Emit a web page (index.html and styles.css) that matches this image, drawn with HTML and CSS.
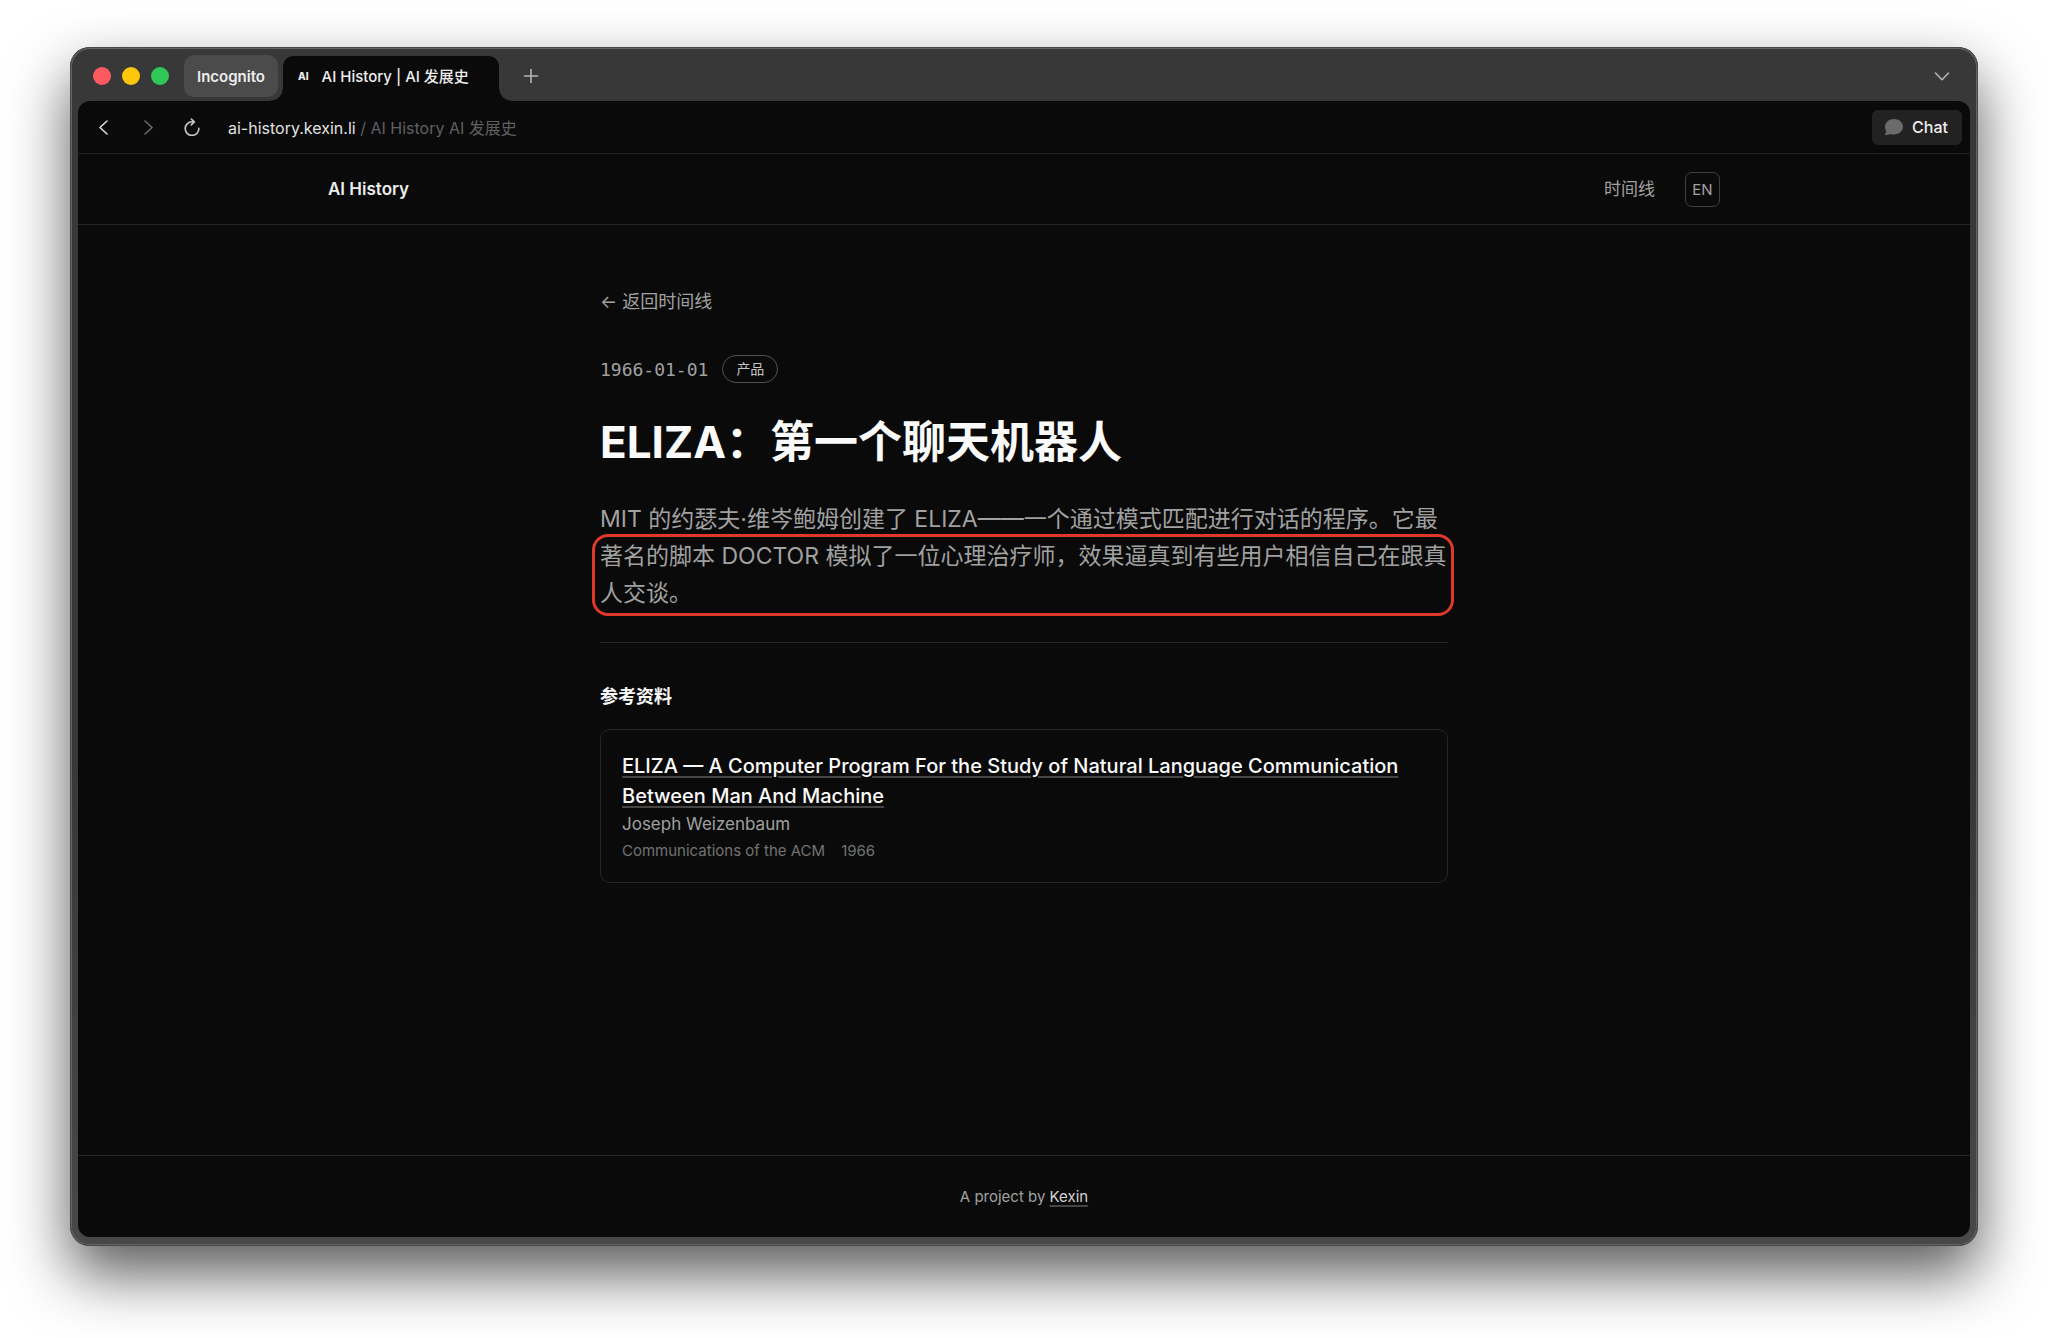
FILE: index.html
```html
<!DOCTYPE html>
<html lang="zh-CN">
<head>
<meta charset="utf-8">
<meta name="viewport" content="width=device-width, initial-scale=1">
<title>AI History | AI 发展史</title>
<link rel="stylesheet" href="styles.css">
</head>
<body>
<div class="window">
  <div class="tabstrip">
    <div class="lights">
      <button class="light light-close" aria-label="Close"></button>
      <button class="light light-min" aria-label="Minimize"></button>
      <button class="light light-zoom" aria-label="Zoom"></button>
    </div>
    <button class="profile">Incognito</button>
    <button class="tab"><span class="favicon">AI</span><span>AI History | AI 发展史</span></button>
    <button class="icon-btn new-tab" aria-label="New tab">
      <svg width="16" height="16" viewBox="0 0 16 16"><path d="M8 1.5v13M1.5 8h13"/></svg>
    </button>
    <button class="icon-btn tab-list" aria-label="Tab list">
      <svg width="16" height="16" viewBox="0 0 16 16"><path d="M1.5 5 8 11.700l6.500-6.700"/></svg>
    </button>
  </div>

  <div class="view">
    <div class="toolbar">
      <nav class="history" aria-label="Browser">
        <button class="icon-btn back" aria-label="Back">
          <svg width="16" height="16" viewBox="0 0 16 16"><path d="M11 2 4 8.500l7 6.500"/></svg>
        </button>
        <button class="icon-btn forward" aria-label="Forward">
          <svg width="16" height="16" viewBox="0 0 16 16"><path d="M5 2l7 6.500L5 15"/></svg>
        </button>
        <button class="icon-btn reload" aria-label="Reload">
          <svg width="16" height="18" viewBox="0 0 16 18"><path d="M14.800 10.200A6.800 6.800 0 1 1 8 3.800h2M7.300 1l3 2.900-3 3"/></svg>
        </button>
      </nav>
      <div class="address"><span class="host">ai-history.kexin.li</span> / AI History AI 发展史</div>
      <button class="chat">
        <svg width="20" height="18" viewBox="0 0 20 18"><path d="M10 1c5 0 9 3.400 9 7.800s-4 7.700-9 7.700c-1.300 0-2.500-.2-3.600-.6-1.500.8-3.300 1.200-5.100 1.100-.5 0-.6-.5-.3-.8.8-.8 1.200-1.800 1.200-2.900C1.400 12 1 10.500 1 8.800 1 4.400 5 1 10 1z"/></svg>
        <span>Chat</span>
      </button>
    </div>

    <header class="site-header">
      <div class="site-header-inner">
        <a class="brand" href="#">AI History</a>
        <nav class="site-nav">
          <a class="nav-link" href="#">时间线</a>
          <a class="lang" href="#">EN</a>
        </nav>
      </div>
    </header>

    <main class="article">
      <a class="back-link" href="#">← 返回时间线</a>
      <div class="meta">
        <time datetime="1966-01-01">1966-01-01</time>
        <span class="badge">产品</span>
      </div>
      <h1 class="title">ELIZA：第一个聊天机器人</h1>
      <div class="summary">
        <p class="summary-text">MIT 的约瑟夫·维岑鲍姆创建了 ELIZA——一个通过模式匹配进行对话的程序。它最著名的脚本 DOCTOR 模拟了一位心理治疗师，效果逼真到有些用户相信自己在跟真人交谈。</p>
        <div class="highlight"></div>
      </div>
      <section class="references">
        <h2 class="section-title">参考资料</h2>
        <article class="card">
          <h3 class="card-title"><a href="#">ELIZA — A Computer Program For the Study of Natural Language Communication Between Man And Machine</a></h3>
          <p class="card-author">Joseph Weizenbaum</p>
          <p class="card-source"><span>Communications of the ACM</span><span>1966</span></p>
        </article>
      </section>
    </main>

    <footer class="site-footer">A project by <a href="#">Kexin</a></footer>
  </div>
</div>
</body>
</html>
```

FILE: styles.css
```css
* {
  box-sizing: border-box;
}

body {
  display: flex;
  min-height: 100vh;
  margin: 0;
  padding: 47px 70px 92px;
  background: #fff;
  color: #ededed;
  font-family: Inter, "Noto Sans CJK SC", sans-serif;
  font-size: 16px;
}

h1, h2, h3, p {
  margin: 0;
}

a {
  color: inherit;
  text-decoration: none;
}

button {
  margin: 0;
  padding: 0;
  border: 0;
  background: none;
  color: inherit;
  font: inherit;
}

/* Browser window */
.window {
  display: flex;
  flex: 1;
  flex-direction: column;
  min-width: 0;
  padding: 0 8px 9px;
  border-radius: 20px;
  background: linear-gradient(#383838, #383838 60%, #484848);
  box-shadow: inset 0 0 0 1px #484848, inset 0 0 0 2px #636363, 0 28px 60px rgba(0, 0, 0, 0.65);
}

.tabstrip {
  display: flex;
  align-items: center;
  height: 54px;
  padding: 4px 20px 0 15px;
}

.lights {
  display: flex;
  gap: 11px;
  margin-right: 15px;
}

.light {
  width: 18px;
  height: 18px;
  border-radius: 50%;
}

.light-close { background: #ff5a5f; }
.light-min { background: #fdc70c; }
.light-zoom { background: #32c759; }

.profile {
  height: 42px;
  padding: 0 13px;
  border-radius: 10px;
  background: #4b4b4b;
  font-size: 15px;
  font-weight: 600;
}

.tab {
  position: relative;
  display: flex;
  align-items: center;
  align-self: flex-end;
  gap: 13px;
  width: 216px;
  height: 45px;
  margin-left: 5px;
  padding: 0 15px 6px;
  border-radius: 10px 10px 0 0;
  background: #0a0a0a;
  font-size: 15px;
  font-weight: 500;
  white-space: nowrap;
}

.tab::before,
.tab::after {
  position: absolute;
  bottom: 0;
  width: 12px;
  height: 12px;
  content: "";
}

.tab::before {
  right: 100%;
  background: radial-gradient(circle at 0 0, transparent 11px, #0a0a0a 12px);
}

.tab::after {
  left: 100%;
  background: radial-gradient(circle at 100% 0, transparent 11px, #0a0a0a 12px);
}

.favicon {
  font-size: 10px;
  font-weight: 800;
}

.icon-btn {
  display: flex;
  fill: none;
  stroke: currentColor;
  stroke-linecap: round;
  stroke-linejoin: round;
  stroke-width: 1.6px;
}

.new-tab {
  margin-left: 24px;
  color: #b4b4b4;
}

.tab-list {
  margin-left: auto;
  color: #b4b4b4;
}

.view {
  display: flex;
  flex: 1;
  flex-direction: column;
  border-radius: 12px;
  background: #0a0a0a;
}

.toolbar {
  display: flex;
  align-items: center;
  height: 53px;
  padding: 0 8px 0 18px;
  border-bottom: 1px solid #222;
}

.history {
  display: flex;
  align-items: center;
  gap: 28px;
  margin-right: 28px;
}

.back { color: #dcdcdc; }
.forward { color: #6a6a6a; }
.reload { color: #c8c8c8; }

.address {
  flex: 1;
  color: #606060;
}

.host {
  color: #e2e2e2;
}

.chat {
  display: flex;
  align-items: center;
  gap: 8px;
  height: 35px;
  padding: 0 14px 0 12px;
  border-radius: 6px;
  background: #222;
  font-weight: 500;
}

.chat svg {
  fill: #6b6b6b;
}

/* Site */
.site-header {
  border-bottom: 1px solid #262626;
}

.site-header-inner {
  display: flex;
  align-items: center;
  justify-content: space-between;
  max-width: 1392px;
  height: 70px;
  margin: 0 auto;
}

.brand {
  font-size: 17px;
  font-weight: 600;
}

.site-nav {
  display: flex;
  align-items: center;
  gap: 30px;
  color: #a1a1a1;
}

.nav-link {
  font-size: 17px;
  line-height: 24px;
}

.lang {
  display: grid;
  place-items: center;
  width: 35px;
  height: 35px;
  border: 1px solid #404040;
  border-radius: 7px;
  font-size: 15px;
}

.article {
  flex: 1;
  width: 100%;
  max-width: 848px;
  margin: 0 auto;
  padding: 64px 0;
}

.back-link {
  display: block;
  color: #a1a1a1;
  font-size: 18px;
  line-height: 26px;
}

.meta {
  display: flex;
  align-items: center;
  gap: 14px;
  margin-top: 40px;
  color: #a1a1a1;
  font-family: "DejaVu Sans Mono", monospace;
  font-size: 18px;
}

.badge {
  padding: 0 13px;
  border: 1px solid #525252;
  border-radius: 14px;
  color: #c4c4c4;
  font-family: Inter, "Noto Sans CJK SC", sans-serif;
  font-size: 14px;
  line-height: 26px;
}

.title {
  margin-top: 32px;
  color: #fafafa;
  font-size: 44px;
  font-weight: 700;
  line-height: 54px;
}

.summary {
  position: relative;
  margin-top: 32px;
  padding-bottom: 30px;
  border-bottom: 1px solid #262626;
}

.summary-text {
  color: #a1a1a1;
  font-size: 23px;
  line-height: 37px;
}

.highlight {
  position: absolute;
  inset: 33px -6px 26px -8px;
  border: 3px solid #e0392a;
  border-radius: 16px;
}

.section-title {
  margin-top: 41px;
  color: #fafafa;
  font-size: 18px;
  font-weight: 600;
  line-height: 26px;
}

.card {
  margin-top: 19px;
  padding: 21px 21px 17px;
  border: 1px solid #262626;
  border-radius: 10px;
}

.card-title {
  color: #fafafa;
  font-size: 20px;
  font-weight: 500;
  line-height: 30px;
}

.card-title a,
.site-footer a {
  text-decoration: underline;
  text-decoration-color: #454545;
  text-decoration-thickness: 2px;
  text-underline-offset: 3px;
}

.card-author {
  color: #a1a1a1;
  font-size: 17px;
  line-height: 26px;
}

.card-source {
  display: flex;
  gap: 16px;
  color: #737373;
  font-size: 15px;
  line-height: 28px;
}

.site-footer {
  padding: 30px 0;
  border-top: 1px solid #262626;
  color: #a1a1a1;
  font-size: 15px;
  line-height: 21px;
  text-align: center;
}

.site-footer a {
  color: #d4d4d4;
}
```
